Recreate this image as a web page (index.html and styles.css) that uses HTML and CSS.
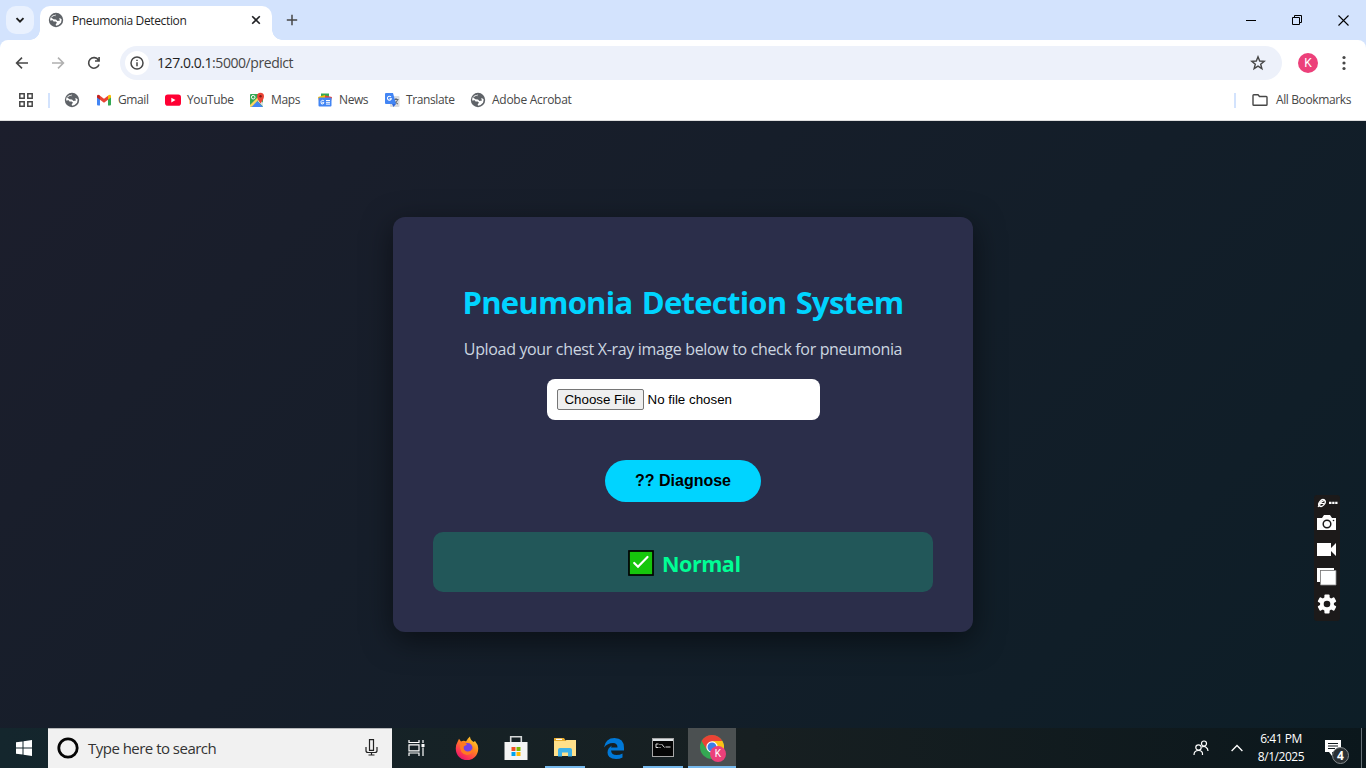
FILE: index.html
```
<!DOCTYPE html>
<html lang="en">
<head>
<meta charset="utf-8">
<title>Pneumonia Detection</title>
<link rel="stylesheet" href="styles.css">
</head>
<body>
<svg class="defs" aria-hidden="true">
  <symbol id="globe" viewBox="0 0 16 16"><circle cx="8" cy="8" r="7.200" fill="#5f6368"/><path d="M8.300 2.500 6.800 4.300 8 5.600 9.900 6.600 12.200 6.300 13.700 7.600 13 10.800 10.500 13 8 13.800 7.700 12.300 9 10.700 7.700 9.600 5.500 9.400 4.800 8.200 2.100 8.500 2.400 5.800 4.600 3.400Z" fill="#fff"/><path d="M3 5.500 5.500 7.300 8 7.600 9.500 9 12 8.400 11 6 8 5 6.500 3.500Z" fill="#5f6368"/></symbol>
</svg>
<header class="browser">
  <div class="tabs">
    <button class="tab-search"><svg width="10" height="10" viewBox="0 0 10 10"><path d="M1.500 3.200 5 6.700 8.500 3.200" fill="none" stroke="#1f1f1f" stroke-width="1.900"/></svg></button>
    <div class="tab">
      <svg width="16" height="16"><use href="#globe"/></svg>
      <span class="tab-title">Pneumonia Detection</span>
      <svg class="tab-close" width="10" height="10" viewBox="0 0 10 10"><path d="M1.200 1.200 8.800 8.800M8.800 1.200 1.200 8.800" stroke="#202124" stroke-width="1.600"/></svg>
    </div>
    <svg class="new-tab" width="12" height="12" viewBox="0 0 12 12"><path d="M6 .8V11.200M.8 6H11.200" stroke="#474747" stroke-width="1.500"/></svg>
    <div class="window-controls">
      <svg width="10" height="10"><path d="M0 5.500H10" stroke="#000"/></svg>
      <svg width="10" height="10"><path d="M.5 2.500H7.500V9.500H.5ZM2.500 2.500V.5H9.500V7.500H7.500" fill="none" stroke="#000"/></svg>
      <svg width="11" height="11"><path d="M.5.5 10.500 10.500M10.500.5.5 10.500" stroke="#000" stroke-width="1.100"/></svg>
    </div>
  </div>
  <div class="toolbar">
    <svg class="nav" width="16" height="16" viewBox="0 0 16 16"><path d="M14 8H3M8 2.600 2.600 8 8 13.400" fill="none" stroke="#474747" stroke-width="1.600"/></svg>
    <svg class="nav" width="16" height="16" viewBox="0 0 16 16"><path d="M2 8H13M8 2.600 13.400 8 8 13.400" fill="none" stroke="#b0b0b0" stroke-width="1.600"/></svg>
    <svg class="nav" width="16" height="16" viewBox="0 0 16 16"><path d="M13 9.500A5.300 5.300 0 1 1 12.400 5M13.100 2V6H9" fill="none" stroke="#474747" stroke-width="1.600"/></svg>
    <div class="address">
      <span class="info"><svg width="14" height="14" viewBox="0 0 14 14"><circle cx="7" cy="7" r="6" fill="none" stroke="#474747" stroke-width="1.500"/><path d="M7 6.200V10.200M7 3.700V5.100" stroke="#474747" stroke-width="1.500"/></svg></span>
      <span class="url"><b>127.0.0.1</b>:5000/predict</span>
      <svg class="star" width="16" height="16" viewBox="0 0 16 16"><path d="M8 1.800 9.700 6 14.200 6.300 10.700 9.200 11.900 13.700 8 11.200 4.100 13.700 5.300 9.200 1.800 6.300 6.300 6Z" fill="none" stroke="#474747" stroke-width="1.400"/></svg>
    </div>
    <span class="avatar">K</span>
    <svg class="menu" width="4" height="16" viewBox="0 0 4 16"><g fill="#474747"><circle cx="2" cy="2.500" r="1.600"/><circle cx="2" cy="8" r="1.600"/><circle cx="2" cy="13.500" r="1.600"/></g></svg>
  </div>
  <nav class="bookmarks">
    <svg class="apps" width="14" height="14" viewBox="0 0 14 14"><path d="M.8.8H5.200V5.200H.8ZM8.800.8H13.200V5.200H8.800ZM.8 8.800H5.200V13.200H.8ZM8.800 8.800H13.200V13.200H8.800Z" fill="none" stroke="#474747" stroke-width="1.500"/></svg>
    <i class="divider"></i>
    <svg class="lone" width="16" height="16"><use href="#globe"/></svg>
    <a class="mark gmail"><svg width="16" height="16" viewBox="0 0 16 16"><path d="M1 4 4 6V13.500H2Q1 13.500 1 12.500Z" fill="#4285f4"/><path d="M12 6 15 4V12.500Q15 13.500 14 13.500H12Z" fill="#34a853"/><path d="M4 3.800 8 6.800 12 3.800V7.800L8 10.800 4 7.800Z" fill="#ea4335"/><path d="M1 4Q1.500 1.500 4 3.600V7.800L1 5.600Z" fill="#c5221f"/><path d="M12 3.600Q14.500 1.500 15 4V5.600L12 7.800Z" fill="#fbbc04"/></svg><span>Gmail</span></a>
    <a class="mark youtube"><svg width="16" height="16" viewBox="0 0 16 16"><rect y="2.500" width="16" height="11.200" rx="2.800" fill="#ff0033"/><path d="M6.300 5.700 10.500 8.100 6.300 10.500Z" fill="#fff"/></svg><span>YouTube</span></a>
    <a class="mark maps"><svg width="16" height="16" viewBox="0 0 16 16"><rect x="1" y="2" width="13" height="13" rx="1" fill="#34a853"/><path d="M2 15 8 9 14 15Z" fill="#4285f4"/><path d="M1 13 11 3V6L3 14.500 1 15Z" fill="#fdd663"/><path d="M8.500 9 10.500 7 14 10.500V14.500Z" fill="#dfe3e7"/><circle cx="4.200" cy="5.200" r="1.800" fill="none" stroke="#fff"/><path d="M11.500 11.500Q8 7 8 4.300A3.500 3.500 0 0 1 15 4.300Q15 7 11.500 11.500Z" fill="#ea4335"/><circle cx="11.500" cy="4.300" r="1.200" fill="#7b1e18"/></svg><span>Maps</span></a>
    <a class="mark news"><svg width="16" height="16" viewBox="0 0 16 16"><path d="M4 1.500H12V6H4Z" fill="#34a853"/><path d="M1 5 8 3 9 8 2 9Z" fill="#fbbc04"/><path d="M8 3.500 15 5 14 9H8Z" fill="#ea4335"/><rect x="1.500" y="5.500" width="13" height="9" rx="1" fill="#4285f4"/><path d="M6.800 8.700Q5.700 8 4.700 8.600T4.100 11 6 11.800 6.800 10.400H5.300M9 8.500H13M9 10.300H13M9 12.100H13" stroke="#fff" fill="none"/></svg><span>News</span></a>
    <a class="mark translate"><svg width="16" height="16" viewBox="0 0 16 16"><rect x="6" y="4" width="9.500" height="11" rx="1" fill="#dadce0"/><path d="M9 7.500H14.500M12 6V7.500M13.500 8Q12.500 11 10 12M10.500 9Q12 11.500 14 12" stroke="#5f6368" fill="none"/><path d="M2 1H9L12 12H2Q1 12 1 11V2Q1 1 2 1Z" fill="#4285f4"/><path d="M8 12H12L9.500 15Z" fill="#3367d6"/><path d="M7 5A2 2 0 1 0 7.400 6.700H5.500" stroke="#fff" stroke-width="1.100" fill="none"/></svg><span>Translate</span></a>
    <a class="mark acrobat"><svg width="16" height="16"><use href="#globe"/></svg><span>Adobe Acrobat</span></a>
    <div class="all"><i class="divider"></i><svg width="16" height="14" viewBox="0 0 16 14"><path d="M1 11.500V2.500Q1 1.700 1.800 1.700H6L7.500 3.500H14.200Q15 3.500 15 4.300V11.500Q15 12.300 14.200 12.300H1.800Q1 12.300 1 11.500Z" fill="none" stroke="#474747" stroke-width="1.400"/></svg><span>All Bookmarks</span></div>
  </nav>
</header>
<main class="page">
  <section class="card">
    <h1>Pneumonia Detection System</h1>
    <p class="hint"><span>Upload your chest X-ray image below to check for pneumonia</span></p>
    <div class="file"><button>Choose File</button><span>No file chosen</span></div>
    <button class="diagnose">?? Diagnose</button>
    <div class="result"><svg width="26" height="26" viewBox="0 0 26 26"><rect x="1" y="1" width="24" height="24" fill="#16c60c" stroke="#000" stroke-width="1.700"/><path d="M6.200 13 10 16.800 19.500 7" fill="none" stroke="#fff" stroke-width="2.200" stroke-linecap="round"/></svg><span>Normal</span></div>
  </section>
</main>
<aside class="capture">
  <svg width="26" height="126" viewBox="0 0 26 126">
    <g fill="none" stroke="#fff" stroke-width="1.400"><ellipse cx="8" cy="8" rx="3.800" ry="2.600" transform="rotate(-50 8 8)"/><path d="M4 12 7 8M7 6V8.500H10M5 8.500 11 5" stroke-width="1.100"/></g>
    <path d="M15 6.800H17.500V9H15ZM18.200 6.800H20.500V9H18.200ZM21.200 6.800H23.500V9H21.200Z" fill="#fff"/>
    <path d="M3 23H8L10 20H16L18 23H22V35H3Z" fill="#fff"/><circle cx="13" cy="29" r="3.800" fill="#fff" stroke="#1c1a1a" stroke-width="1.500"/><circle cx="19.500" cy="25.500" r=".8" fill="#1c1a1a"/>
    <path d="M3 48H17V53L22 48V61L17 56V61H3Z" fill="#fff"/>
    <path d="M3 73H20V75H6V87H3Z" fill="#fff"/><path d="M6.500 75.500H22V90H6.500Z" fill="#fff" stroke="#8d8d8d" stroke-width=".8"/>
    <g transform="translate(13 109)" fill="#fff"><circle r="7"/><rect x="-2.600" y="-9.500" width="5.200" height="19" rx="1"/><rect x="-2.600" y="-9.500" width="5.200" height="19" rx="1" transform="rotate(60)"/><rect x="-2.600" y="-9.500" width="5.200" height="19" rx="1" transform="rotate(120)"/><circle r="3.300" fill="#1c1a1a"/></g>
  </svg>
</aside>
<footer class="taskbar">
  <div class="start"><svg width="16" height="16" viewBox="0 0 16 16"><path d="M0 2.300 6.500 1.400V7.500H0ZM7.500 1.200 16 0V7.500H7.500ZM0 8.500H6.500V14.600L0 13.700ZM7.500 8.500H16V16L7.500 14.800Z" fill="#fff"/></svg></div>
  <div class="search"><svg width="22" height="22" viewBox="0 0 22 22"><circle cx="11" cy="11" r="9.200" fill="none" stroke="#050505" stroke-width="2.800"/></svg><span>Type here to search</span><svg width="13" height="17" viewBox="0 0 13 17"><path d="M4.500.7H8.500V11.300H4.500ZM1 8V11.500Q1 13.500 3 13.500H10Q12 13.500 12 11.500V8M6.500 13.500V16M3.500 16H9.500" fill="none" stroke="#222" stroke-width="1.200"/></svg></div>
  <div class="task view"><svg width="18" height="16" viewBox="0 0 18 16"><path d="M1 0V2.500H11V0M1 4.800H11V10.800H1ZM1 16V13H11V16M15 0V3M15 7.500V16" fill="none" stroke="#fff" stroke-width="1.200"/><rect x="13.500" y="4" width="3" height="3" fill="#fff"/></svg></div>
  <div class="task firefox"><svg width="24" height="24" viewBox="0 0 24 24"><defs><linearGradient id="ff" x1="1" y1="0" x2=".3" y2="1"><stop offset="0" stop-color="#ffec37"/><stop offset=".45" stop-color="#ff8a1c"/><stop offset=".8" stop-color="#ff3850"/><stop offset="1" stop-color="#e5176c"/></linearGradient></defs><path d="M2.500 6 4 2.800 6 5.500Q9 3.800 11 5.500L13 2.500 15 .5Q15 3.500 18.500 6L20 5Q23.500 9 23.200 13A11.200 11.200 0 0 1 .8 13Q.6 9 2.500 6Z" fill="url(#ff)"/><circle cx="12.500" cy="12" r="5" fill="#7542e5"/><path d="M5 7Q9 5 12 8.500L8.800 10.500Q8 14.500 12 15.500 16 16 17.500 12 19 18 12 19 4 18 5 7Z" fill="#ff7a22"/></svg></div>
  <div class="task store"><svg width="24" height="24" viewBox="0 0 24 24"><path d="M6.700 7V.8H17.300V7" fill="none" stroke="#d5d8d8" stroke-width="1.600"/><path d="M.5 6H23.500V24H.5Z" fill="#f4f4f4"/><path d="M7.500 11H11.500V15H7.500Z" fill="#f25022"/><path d="M12.500 11H16.500V15H12.500Z" fill="#7fba00"/><path d="M7.500 16H11.500V20H7.500Z" fill="#00a4ef"/><path d="M12.500 16H16.500V20H12.500Z" fill="#ffb900"/></svg></div>
  <div class="task open"><svg width="22" height="19" viewBox="0 0 22 19"><path d="M0 0H10L11.500 2.500H21V18H0Z" fill="#e8ac2e"/><path d="M0 3H11L12.500 2H22V18H0Z" fill="#ffe08a"/><path d="M2 .8H8V2H2Z" fill="#fff"/><path d="M4 18.500V12Q4 10 6 10H16Q18 10 18 12V18.500H14V14.500H8V18.500Z" fill="#3eb2e8"/></svg></div>
  <div class="task edge"><svg width="20" height="21" viewBox="0 0 20 21"><path d="M0 9.500Q1.500 0 10.500 0 20 0 20 10V12.500H7Q7.500 17 12.500 17 16 17 18.500 15.500V19.500Q15.500 21 12 21 3.500 21 3.500 14.500 3.500 10 8 7.500 7 9 7 9.500H13.500Q13.500 5 9 5 3.500 5 0 9.500Z" fill="#0078d7"/></svg></div>
  <div class="task open terminal"><svg width="22" height="19" viewBox="0 0 22 19"><rect x=".5" y=".5" width="21" height="18" fill="#050505" stroke="#a7a7a7"/><path d="M1 1H21V3H1Z" fill="#dfe4e6"/><path d="M6.500 6H4V9.500H6.500M8 6V7M8 9V10M9.500 6 12.500 9.500M13.500 9H18.500" stroke="#ddd" fill="none"/></svg></div>
  <div class="task open active"><svg width="24" height="24" viewBox="0 0 24 24"><circle cx="12" cy="12" r="12" fill="#34a853"/><path d="M1.600 6A12 12 0 0 1 22.400 6L12 12 7 15Z" fill="#ea4335"/><path d="M12 6H22.400A12 12 0 0 1 12 24L17 15Z" fill="#fbc116"/><circle cx="12" cy="12" r="5.700" fill="#fff"/><circle cx="12" cy="12" r="4.500" fill="#397ee8"/></svg><b class="badge">K</b></div>
  <div class="tray">
    <svg class="people" width="16" height="16" viewBox="0 0 16 16"><g fill="none" stroke="#fff" stroke-width="1.200"><circle cx="5.500" cy="7.500" r="2.700"/><path d="M1 15Q1 10.500 5.500 10.500T9.500 15"/><circle cx="11" cy="3.500" r="2.500"/><path d="M9 7Q11 5.500 13 7.200 15 8.500 15 11"/></g></svg>
    <svg class="up" width="12" height="8" viewBox="0 0 12 8"><path d="M.6 7 6 1.500 11.400 7" fill="none" stroke="#fff" stroke-width="1.300"/></svg>
    <div class="clock"><span>6:41 PM</span><span>8/1/2025</span></div>
    <div class="notice"><svg width="16" height="16" viewBox="0 0 16 16"><path d="M0 0H16V12H7V16L4 12H0Z" fill="#fff"/><path d="M3 3.500H13M3 6H13M3 8.500H10" stroke="#10191e"/></svg><b>4</b></div>
    <i class="desktop-edge"></i>
  </div>
</footer>
</body>
</html>
```

FILE: styles.css
```
* { box-sizing: border-box; }
body { margin: 0; width: 1366px; height: 768px; overflow: hidden; display: flex; flex-direction: column; font-family: "Open Sans", "Noto Sans", sans-serif; background: #0f2027; }
svg { display: block; flex: none; }
button { border: 0; padding: 0; }
span { white-space: nowrap; }
.defs { display: none; }
.browser { height: 121px; background: #d3e3fd; flex: none; }
.tabs { height: 40px; display: flex; align-items: center; padding-left: 6px; }
.tab-search { width: 28px; height: 28px; border-radius: 10px; background: #e9f1fe; display: grid; place-items: center; margin-right: 6px; }
.tab { position: relative; width: 232px; height: 34px; margin-top: 6px; padding: 0 11px 6px 8px; background: #fff; border-radius: 10px 10px 0 0; display: flex; align-items: center; gap: 8px; }
.tab::before, .tab::after { content: ""; position: absolute; bottom: 0; width: 10px; height: 10px; }
.tab::before { left: -10px; background: radial-gradient(circle at 0 0, transparent 9.500px, #fff 10px); }
.tab::after { right: -10px; background: radial-gradient(circle at 100% 0, transparent 9.500px, #fff 10px); }
.tab-title { font-size: 12px; color: #1f1f1f; letter-spacing: -.36px; }
.tab-close { margin-left: auto; }
.new-tab { margin-left: 14px; }
.window-controls { margin-left: auto; display: flex; gap: 36px; padding-right: 17px; }
.toolbar { height: 40px; background: #fff; border-radius: 8px 8px 0 0; display: flex; align-items: center; padding: 6px 20px 0 14px; }
.nav { margin-right: 20px; }
.address { width: 1162px; height: 34px; border-radius: 17px; background: #edf1fa; display: flex; align-items: center; padding: 0 16px 0 5px; margin-left: -2px; }
.info { width: 24px; height: 24px; border-radius: 50%; background: #fff; display: grid; place-items: center; margin-right: 8px; }
.url { font-size: 14px; color: #474747; letter-spacing: -.44px; padding-bottom: 1px; }
.url b { color: #1f1f1f; font-weight: 400; }
.star { margin-left: auto; }
.avatar { width: 20px; height: 20px; border-radius: 50%; background: #ec407a; color: #fff; font: 12px/20px Roboto, sans-serif; text-align: center; margin-left: 16px; }
.menu { margin-left: auto; }
.bookmarks { height: 41px; background: #fff; border-bottom: 1px solid #dedede; display: flex; align-items: center; padding-left: 19px; font-size: 12px; color: #474747; }
.divider { width: 2px; height: 15px; background: #d3e3fd; flex: none; }
.apps { margin-right: 15px; }
.lone { margin: 0 16px 0 14px; }
.mark { display: flex; align-items: center; gap: 6px; flex: none; }
.mark span, .all span { letter-spacing: -.38px; padding-bottom: 1px; }
.gmail { width: 69px; }
.mark.gmail span { letter-spacing: -.4px; }
.mark.news span { letter-spacing: -.4px; }
.youtube { width: 84px; }
.mark.youtube span { letter-spacing: -.4px; }
.maps { width: 68px; }
.news { width: 67px; }
.translate { width: 86px; }
.mark.acrobat span { letter-spacing: -.27px; }
.all { margin-left: auto; width: 132px; display: flex; align-items: center; }
.all svg { margin: 0 8px 0 16px; }
.page { flex: 1; display: grid; place-items: center; background: linear-gradient(135deg, #1c1e2c, #0d1e27); }
.card { width: 580px; height: 415px; border-radius: 12px; padding: 61px 40px 40px; background: #2b2e4a; box-shadow: 0 8px 30px rgba(0, 0, 0, .5); display: flex; flex-direction: column; align-items: center; }
h1 { margin: 0; font-size: 31px; line-height: 48px; font-weight: 700; color: #00d4ff; white-space: nowrap; letter-spacing: -.75px; word-spacing: 2px; }
.hint { margin: 11px 0 0; font-size: 16px; line-height: 24px; color: #ccd6e0; letter-spacing: -.34px; }
.file { width: 273px; height: 41px; margin-top: 18px; border-radius: 8px; background: #fff; padding: 10px; display: flex; align-items: center; gap: 4px; font: 13.333px "Liberation Sans", Arial, sans-serif; color: #000; }
.file button { width: 87px; height: 21px; font: inherit; color: #000; background: #efefef; border: 1px solid #767676; border-radius: 2px; }
.diagnose { width: 156px; height: 42px; margin-top: 40px; border-radius: 21px; background: #00d4ff; color: #000; font: bold 16px "Liberation Sans", Arial, sans-serif; }
.result { width: 500px; height: 60px; margin-top: 30px; border-radius: 10px; background: #225759; display: flex; align-items: center; padding: 2px 0 0 195px; gap: 8px; color: #00ff95; font-size: 21.500px; font-weight: 700; letter-spacing: -.45px; }
.capture { position: absolute; left: 1314px; top: 495px; width: 26px; height: 126px; border-radius: 3px; background: #1c1a1a; }
.taskbar { height: 40px; display: flex; background: linear-gradient(90deg, #14262d, #171f21 55%, #0b171c); flex: none; }
.start { width: 48px; display: grid; place-items: center; }
.search { width: 344px; background: #f1f1f1; border-top: 1px solid #b6b8ba; display: flex; align-items: center; padding: 0 14px 2px 9px; gap: 9px; color: #333; font-size: 15px; letter-spacing: -.52px; }
.search svg:last-child { margin-left: auto; }
.task { position: relative; width: 48px; margin-right: 1px; display: grid; place-items: center; }
.view { width: 49px; margin: 0 2px 0 0; }
.open { border-bottom: 2px solid #76b9ed; width: 40px; margin: 0 5px 0 4px; }
.terminal { margin-right: 5px; }
.active { width: 48px; margin: 0; background: #4b5051; }
.badge { position: absolute; left: 22px; top: 18px; width: 16px; height: 16px; border-radius: 50%; background: #ec407a; color: #fff; font: 10px/16px Roboto, sans-serif; text-align: center; }
.tray { margin-left: auto; display: flex; align-items: center; color: #fff; }
.people { margin-right: 22px; }
.clock { width: 62px; margin-left: 7px; display: grid; text-align: center; font-size: 12px; line-height: 18px; letter-spacing: -.45px; }
.notice { position: relative; margin: 0 12px 0 13px; width: 24px; height: 16px; }
.notice b { position: absolute; left: 7px; top: 7px; width: 17px; height: 17px; border: 1px solid #858b8e; border-radius: 50%; background: #2a3034; font-size: 12px; line-height: 15px; text-align: center; }
.desktop-edge { width: 5px; height: 40px; border-left: 1px solid #667177; }
```
